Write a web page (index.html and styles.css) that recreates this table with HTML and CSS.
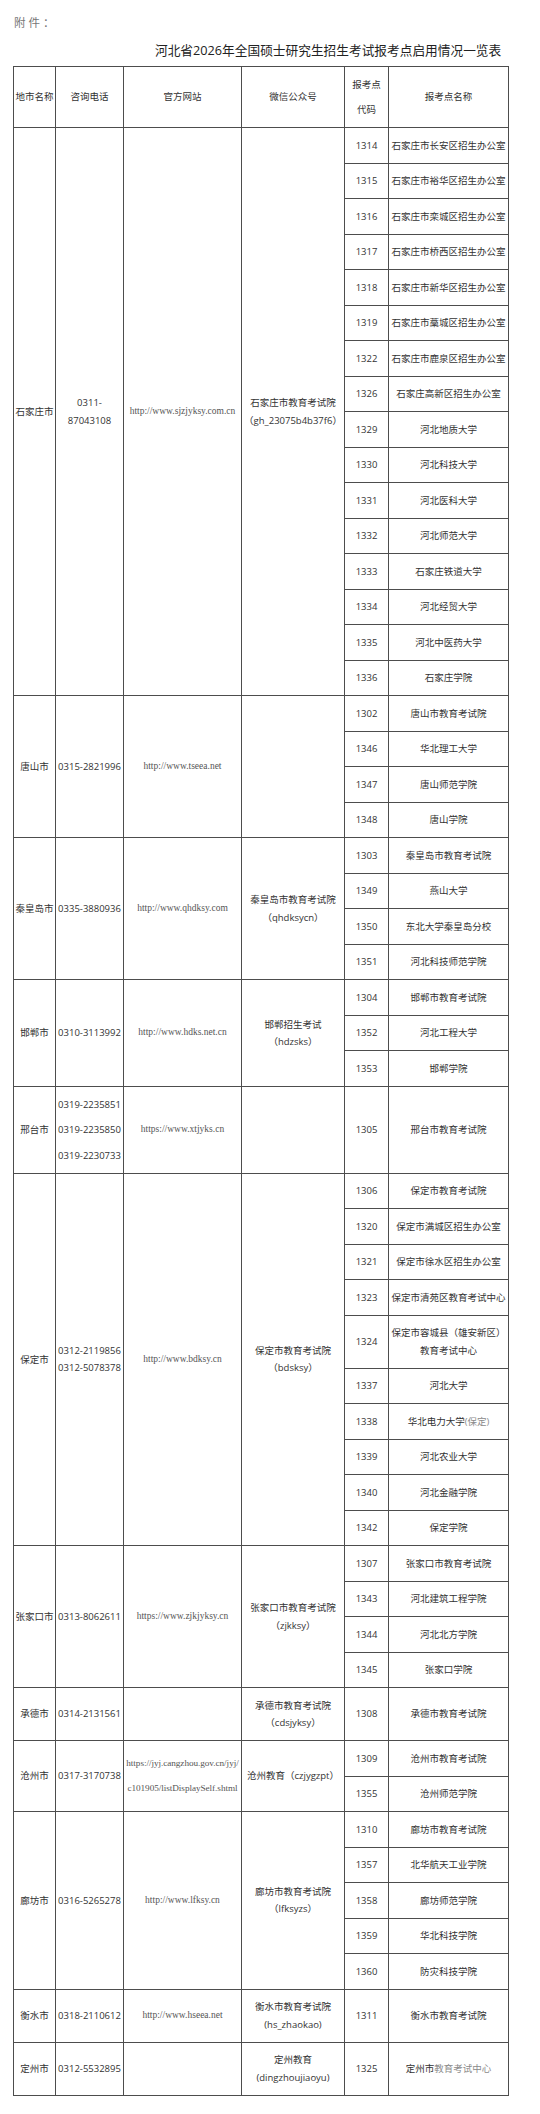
FILE: index.html
```html
<!DOCTYPE html>
<html lang="zh-CN">
<head>
<meta charset="utf-8">
<title>河北省2026年全国硕士研究生招生考试报考点启用情况一览表</title>
<link rel="stylesheet" href="styles.css">
</head>
<body>
<div class="page">
  <p class="att">附件：</p>
  <h1 class="title">河北省2026年全国硕士研究生招生考试报考点启用情况一览表</h1>
  <table class="sheet">
    <colgroup>
      <col class="c-city"><col class="c-tel"><col class="c-url"><col class="c-wx"><col class="c-code"><col class="c-name">
    </colgroup>
    <thead>
      <tr class="hd">
        <th>地市名称</th><th>咨询电话</th><th>官方网站</th><th>微信公众号</th><th class="wide">报考点<br>代码</th><th>报考点名称</th>
      </tr>
    </thead>
    <tbody>
      <tr class="r"><td rowspan="16">石家庄市</td><td rowspan="16">0311-<br>87043108</td><td rowspan="16" class="url">http://www.sjzjyksy.com.cn</td><td rowspan="16">石家庄市教育考试院<br>（gh_23075b4b37f6）</td><td>1314</td><td>石家庄市长安区招生办公室</td></tr>
      <tr class="r"><td>1315</td><td>石家庄市裕华区招生办公室</td></tr>
      <tr class="r"><td>1316</td><td>石家庄市栾城区招生办公室</td></tr>
      <tr class="r"><td>1317</td><td>石家庄市桥西区招生办公室</td></tr>
      <tr class="r"><td>1318</td><td>石家庄市新华区招生办公室</td></tr>
      <tr class="r"><td>1319</td><td>石家庄市藁城区招生办公室</td></tr>
      <tr class="r"><td>1322</td><td>石家庄市鹿泉区招生办公室</td></tr>
      <tr class="r"><td>1326</td><td>石家庄高新区招生办公室</td></tr>
      <tr class="r"><td>1329</td><td>河北地质大学</td></tr>
      <tr class="r"><td>1330</td><td>河北科技大学</td></tr>
      <tr class="r"><td>1331</td><td>河北医科大学</td></tr>
      <tr class="r"><td>1332</td><td>河北师范大学</td></tr>
      <tr class="r"><td>1333</td><td>石家庄铁道大学</td></tr>
      <tr class="r"><td>1334</td><td>河北经贸大学</td></tr>
      <tr class="r"><td>1335</td><td>河北中医药大学</td></tr>
      <tr class="r"><td>1336</td><td>石家庄学院</td></tr>

      <tr class="r"><td rowspan="4">唐山市</td><td rowspan="4">0315-2821996</td><td rowspan="4" class="url">http://www.tseea.net</td><td rowspan="4"></td><td>1302</td><td>唐山市教育考试院</td></tr>
      <tr class="r"><td>1346</td><td>华北理工大学</td></tr>
      <tr class="r"><td>1347</td><td>唐山师范学院</td></tr>
      <tr class="r"><td>1348</td><td>唐山学院</td></tr>

      <tr class="r"><td rowspan="4">秦皇岛市</td><td rowspan="4">0335-3880936</td><td rowspan="4" class="url">http://www.qhdksy.com</td><td rowspan="4">秦皇岛市教育考试院<br>（qhdksycn）</td><td>1303</td><td>秦皇岛市教育考试院</td></tr>
      <tr class="r"><td>1349</td><td>燕山大学</td></tr>
      <tr class="r"><td>1350</td><td>东北大学秦皇岛分校</td></tr>
      <tr class="r"><td>1351</td><td>河北科技师范学院</td></tr>

      <tr class="r3"><td rowspan="3">邯郸市</td><td rowspan="3">0310-3113992</td><td rowspan="3" class="url">http://www.hdks.net.cn</td><td rowspan="3">邯郸招生考试<br>（hdzsks）</td><td>1304</td><td>邯郸市教育考试院</td></tr>
      <tr class="r3"><td>1352</td><td>河北工程大学</td></tr>
      <tr class="r3"><td>1353</td><td>邯郸学院</td></tr>

      <tr class="rx"><td>邢台市</td><td class="wide">0319-2235851<br>0319-2235850<br>0319-2230733</td><td class="url">https://www.xtjyks.cn</td><td></td><td>1305</td><td>邢台市教育考试院</td></tr>

      <tr class="r"><td rowspan="10">保定市</td><td rowspan="10">0312-2119856<br>0312-5078378</td><td rowspan="10" class="url">http://www.bdksy.cn</td><td rowspan="10">保定市教育考试院<br>（bdsksy）</td><td>1306</td><td>保定市教育考试院</td></tr>
      <tr class="r"><td>1320</td><td>保定市满城区招生办公室</td></tr>
      <tr class="r"><td>1321</td><td>保定市徐水区招生办公室</td></tr>
      <tr class="r"><td>1323</td><td>保定市清苑区教育考试中心</td></tr>
      <tr class="r2"><td>1324</td><td>保定市容城县（雄安新区）<br>教育考试中心</td></tr>
      <tr class="r"><td>1337</td><td>河北大学</td></tr>
      <tr class="r"><td>1338</td><td>华北电力大学<span class="faint">(保定)</span></td></tr>
      <tr class="r"><td>1339</td><td>河北农业大学</td></tr>
      <tr class="r"><td>1340</td><td>河北金融学院</td></tr>
      <tr class="r"><td>1342</td><td>保定学院</td></tr>

      <tr class="r"><td rowspan="4">张家口市</td><td rowspan="4">0313-8062611</td><td rowspan="4" class="url">https://www.zjkjyksy.cn</td><td rowspan="4">张家口市教育考试院<br>（zjkksy）</td><td>1307</td><td>张家口市教育考试院</td></tr>
      <tr class="r"><td>1343</td><td>河北建筑工程学院</td></tr>
      <tr class="r"><td>1344</td><td>河北北方学院</td></tr>
      <tr class="r"><td>1345</td><td>张家口学院</td></tr>

      <tr class="r2"><td>承德市</td><td>0314-2131561</td><td class="url"></td><td>承德市教育考试院<br>（cdsjyksy）</td><td>1308</td><td>承德市教育考试院</td></tr>

      <tr class="r"><td rowspan="2">沧州市</td><td rowspan="2">0317-3170738</td><td rowspan="2" class="url wide tight">https://jyj.cangzhou.gov.cn/jyj/<br>c101905/listDisplaySelf.shtml</td><td rowspan="2">沧州教育（czjygzpt）</td><td>1309</td><td>沧州市教育考试院</td></tr>
      <tr class="r"><td>1355</td><td>沧州师范学院</td></tr>

      <tr class="r"><td rowspan="5">廊坊市</td><td rowspan="5">0316-5265278</td><td rowspan="5" class="url">http://www.lfksy.cn</td><td rowspan="5">廊坊市教育考试院<br>（lfksyzs）</td><td>1310</td><td>廊坊市教育考试院</td></tr>
      <tr class="r"><td>1357</td><td>北华航天工业学院</td></tr>
      <tr class="r"><td>1358</td><td>廊坊师范学院</td></tr>
      <tr class="r"><td>1359</td><td>华北科技学院</td></tr>
      <tr class="r"><td>1360</td><td>防灾科技学院</td></tr>

      <tr class="r2"><td>衡水市</td><td>0318-2110612</td><td class="url">http://www.hseea.net</td><td>衡水市教育考试院<br>(hs_zhaokao)</td><td>1311</td><td>衡水市教育考试院</td></tr>
      <tr class="r2"><td>定州市</td><td>0312-5532895</td><td class="url"></td><td>定州教育<br>(dingzhoujiaoyu)</td><td>1325</td><td>定州市<span class="faint">教育考试中心</span></td></tr>
    </tbody>
  </table>
</div>
</body>
</html>
```

FILE: styles.css
```css
html, body {
  margin: 0;
  padding: 0;
  background: #ffffff;
}

.page {
  width: 540px;
  padding-bottom: 19px;
  font-family: "Open Sans", "Noto Sans CJK SC", sans-serif;
  color: #333333;
}

.att {
  margin: 0;
  padding: 15px 0 0 14px;
  font-size: 11.5px;
  line-height: 16px;
  letter-spacing: 3px;
  color: #777777;
  font-weight: normal;
}

.title {
  margin: 10px 0 0 0;
  padding-left: 155px;
  font-size: 12.7px;
  line-height: 18px;
  font-weight: normal;
  color: #222222;
  white-space: nowrap;
}

.sheet {
  margin: 7px 0 0 13px;
  width: 495px;
  table-layout: fixed;
  border-collapse: collapse;
  font-size: 9.5px;
  line-height: 17.5px;
}

.c-city { width: 42px; }
.c-tel { width: 68px; }
.c-url { width: 118px; }
.c-wx { width: 103px; }
.c-code { width: 44px; }
.c-name { width: 120px; }

.sheet th,
.sheet td {
  border: 1px solid #4d4d4d;
  padding: 0;
  text-align: center;
  vertical-align: middle;
  font-weight: normal;
  color: #333333;
  white-space: nowrap;
  overflow: visible;
}

.hd { height: 61px; }
.r { height: 35.5px; }
.r3 { height: 35.7px; }
.r2 { height: 53px; }
.rx { height: 86.6px; }

.sheet .wide { line-height: 25.5px; }

.sheet .url {
  font-family: "Liberation Serif", "Noto Sans CJK SC", serif;
  font-size: 9.5px;
  color: #555555;
}

.sheet .tight {
  font-size: 9.2px;
  letter-spacing: -0.05px;
}

.faint {
  color: #8a8a8a;
}
```
